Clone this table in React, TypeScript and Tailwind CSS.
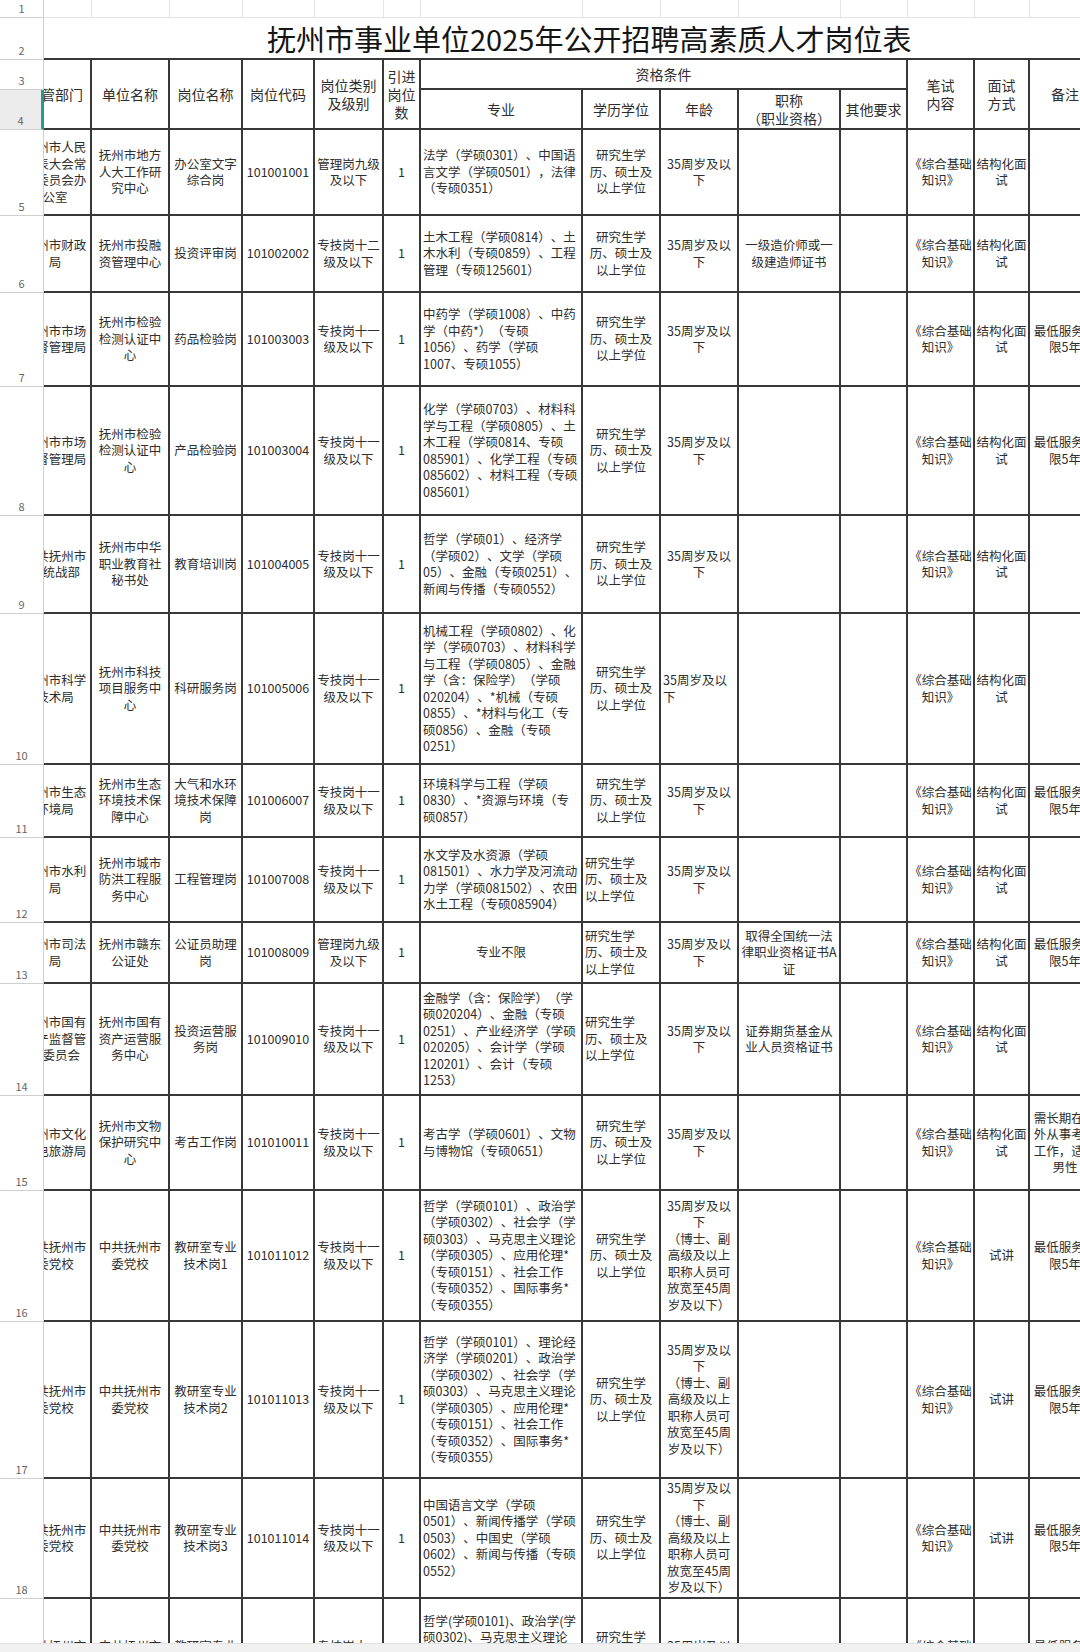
import React from "react";

type Row = {
  n: number;
  h: string;
  a: string;
  b: string;
  c: string;
  d: string;
  e: string;
  g: string;
  edu?: string;
  age?: string;
  j?: string;
  l?: string;
  m?: string;
  note?: string;
  gCenter?: boolean;
  eduLeft?: boolean;
  ageLeft?: boolean;
};

const EDU = "研究生学历、硕士及以上学位";
const AGE = "35周岁及以下";
const AGE_LONG = "35周岁及以下\n（博士、副高级及以上职称人员可放宽至45周岁及以下）";
const EXAM = "《综合基础知识》";
const TALK = "结构化面试";
const SERVE = "最低服务年限5年";

const rows: Row[] = [
  {
    n: 5,
    h: "h-[86px]",
    a: "抚州市人民代表大会常务委员会办公室",
    b: "抚州市地方人大工作研究中心",
    c: "办公室文字综合岗",
    d: "101001001",
    e: "管理岗九级及以下",
    g: "法学（学硕0301）、中国语言文学（学硕0501），法律（专硕0351）",
  },
  {
    n: 6,
    h: "h-[77px]",
    a: "抚州市财政局",
    b: "抚州市投融资管理中心",
    c: "投资评审岗",
    d: "101002002",
    e: "专技岗十二级及以下",
    g: "土木工程（学硕0814）、土木水利（专硕0859）、工程管理（专硕125601）",
    j: "一级造价师或一级建造师证书",
  },
  {
    n: 7,
    h: "h-[94px]",
    a: "抚州市市场监督管理局",
    b: "抚州市检验检测认证中心",
    c: "药品检验岗",
    d: "101003003",
    e: "专技岗十一级及以下",
    g: "中药学（学硕1008）、中药学（中药*）（专硕1056）、药学（学硕\n1007、专硕1055）",
    note: SERVE,
  },
  {
    n: 8,
    h: "h-[129px]",
    a: "抚州市市场监督管理局",
    b: "抚州市检验检测认证中心",
    c: "产品检验岗",
    d: "101003004",
    e: "专技岗十一级及以下",
    g: "化学（学硕0703）、材料科学与工程（学硕0805）、土木工程（学硕0814、专硕085901）、化学工程（专硕085602）、材料工程（专硕085601）",
    note: SERVE,
  },
  {
    n: 9,
    h: "h-[98px]",
    a: "中共抚州市委统战部",
    b: "抚州市中华职业教育社秘书处",
    c: "教育培训岗",
    d: "101004005",
    e: "专技岗十一级及以下",
    g: "哲学（学硕01）、经济学（学硕02）、文学（学硕05）、金融（专硕0251）、新闻与传播（专硕0552）",
  },
  {
    n: 10,
    h: "h-[151px]",
    a: "抚州市科学技术局",
    b: "抚州市科技项目服务中心",
    c: "科研服务岗",
    d: "101005006",
    e: "专技岗十一级及以下",
    g: "机械工程（学硕0802）、化学（学硕0703）、材料科学与工程（学硕0805）、金融学（含：保险学）（学硕020204）、*机械（专硕0855）、*材料与化工（专硕0856）、金融（专硕0251）",
    ageLeft: true,
  },
  {
    n: 11,
    h: "h-[73px]",
    a: "抚州市生态环境局",
    b: "抚州市生态环境技术保障中心",
    c: "大气和水环境技术保障岗",
    d: "101006007",
    e: "专技岗十一级及以下",
    g: "环境科学与工程（学硕0830）、*资源与环境（专硕0857）",
    note: SERVE,
  },
  {
    n: 12,
    h: "h-[85px]",
    a: "抚州市水利局",
    b: "抚州市城市防洪工程服务中心",
    c: "工程管理岗",
    d: "101007008",
    e: "专技岗十一级及以下",
    g: "水文学及水资源（学硕081501）、水力学及河流动力学（学硕081502）、农田水土工程（专硕085904）",
    eduLeft: true,
  },
  {
    n: 13,
    h: "h-[61px]",
    a: "抚州市司法局",
    b: "抚州市赣东公证处",
    c: "公证员助理岗",
    d: "101008009",
    e: "管理岗九级及以下",
    g: "专业不限",
    gCenter: true,
    eduLeft: true,
    j: "取得全国统一法律职业资格证书A证",
    note: SERVE,
  },
  {
    n: 14,
    h: "h-[112px]",
    a: "抚州市国有资产监督管理委员会",
    b: "抚州市国有资产运营服务中心",
    c: "投资运营服务岗",
    d: "101009010",
    e: "专技岗十一级及以下",
    g: "金融学（含：保险学）（学硕020204）、金融（专硕0251）、产业经济学（学硕020205）、会计学（学硕120201）、会计（专硕1253）",
    eduLeft: true,
    j: "证券期货基金从业人员资格证书",
  },
  {
    n: 15,
    h: "h-[95px]",
    a: "抚州市文化广电旅游局",
    b: "抚州市文物保护研究中心",
    c: "考古工作岗",
    d: "101010011",
    e: "专技岗十一级及以下",
    g: "考古学（学硕0601）、文物与博物馆（专硕0651）",
    note: "需长期在野外从事考古工作，适合男性",
  },
  {
    n: 16,
    h: "h-[131px]",
    a: "中共抚州市委党校",
    b: "中共抚州市委党校",
    c: "教研室专业技术岗1",
    d: "101011012",
    e: "专技岗十一级及以下",
    g: "哲学（学硕0101）、政治学（学硕0302）、社会学（学硕0303）、马克思主义理论（学硕0305）、应用伦理*（专硕0151）、社会工作（专硕0352）、国际事务*（专硕0355）",
    age: AGE_LONG,
    m: "试讲",
    note: SERVE,
  },
  {
    n: 17,
    h: "h-[157px]",
    a: "中共抚州市委党校",
    b: "中共抚州市委党校",
    c: "教研室专业技术岗2",
    d: "101011013",
    e: "专技岗十一级及以下",
    g: "哲学（学硕0101）、理论经济学（学硕0201）、政治学（学硕0302）、社会学（学硕0303）、马克思主义理论（学硕0305）、应用伦理*（专硕0151）、社会工作（专硕0352）、国际事务*（专硕0355）",
    age: AGE_LONG,
    m: "试讲",
    note: SERVE,
  },
  {
    n: 18,
    h: "h-[120px]",
    a: "中共抚州市委党校",
    b: "中共抚州市委党校",
    c: "教研室专业技术岗3",
    d: "101011014",
    e: "专技岗十一级及以下",
    g: "中国语言文学（学硕0501）、新闻传播学（学硕0503）、中国史（学硕0602）、新闻与传播（专硕0552）",
    age: AGE_LONG,
    m: "试讲",
    note: SERVE,
  },
  {
    n: 19,
    h: "h-[112px]",
    a: "中共抚州市委党校",
    b: "中共抚州市委党校",
    c: "教研室专业技术岗4",
    d: "101011015",
    e: "专技岗十一级及以下",
    g: "哲学(学硕0101)、政治学(学硕0302)、马克思主义理论(学硕0305)、社会学(学硕0303)、国际事务*(专硕0355)",
    m: "试讲",
    note: SERVE,
  },
];

const cell = "border-r-2 border-b-2 border-[#383838] px-[2px] text-center";
const tight = "border-r-2 border-b-2 border-[#383838] px-0 text-center";
const head = "border-r-2 border-b-2 border-[#383838] px-[2px] text-center text-[14px] leading-[18px] whitespace-pre-line";
const rowNo = "border-r border-b border-[#cfcfcf] text-center align-bottom text-[11px] leading-[14px] text-[#666] pb-[2px]";
const light = "border-r border-b border-[#e4e4e4]";

// column A is scrolled: only its right part shows
const Clipped = ({ text, head: isHead }: { text: string; head?: boolean }) => (
  <div className="w-full overflow-hidden flex justify-end">
    <div className={`w-[70px] shrink-0 px-[2px] text-center ${isHead ? "text-[14px] leading-[18px]" : ""}`}>{text}</div>
  </div>
);

const App = () => {
  return (
    <div className="w-[1080px] h-[1652px] overflow-hidden flex flex-col bg-white text-[#2e2e2e] font-['Noto_Sans_CJK_SC','Noto_Sans',sans-serif] text-[12.5px] leading-[16.5px] [text-spacing-trim:space-all]">
      <div className="h-[1643px] overflow-hidden">
        <table className="table-fixed w-[1102px] border-separate border-spacing-0">
          <colgroup>
            <col className="w-[44px]" />
            <col className="w-[48px]" />
            <col className="w-[78px]" />
            <col className="w-[73px]" />
            <col className="w-[72px]" />
            <col className="w-[69px]" />
            <col className="w-[37px]" />
            <col className="w-[162px]" />
            <col className="w-[78px]" />
            <col className="w-[78px]" />
            <col className="w-[102px]" />
            <col className="w-[67px]" />
            <col className="w-[67px]" />
            <col className="w-[55px]" />
            <col className="w-[72px]" />
          </colgroup>
          <tbody>
            <tr className="h-[18px]">
              <td className={rowNo}>1</td>
              {Array.from({ length: 14 }).map((_, i) => (
                <td key={i} className={light}></td>
              ))}
            </tr>
            <tr className="h-[42px]">
              <td className={rowNo}>2</td>
              <td colSpan={14} className="border-b-2 border-[#383838] pl-[223px] text-left text-[29px] leading-[36px] text-[#151515] whitespace-nowrap">
                抚州市事业单位2025年公开招聘高素质人才岗位表
              </td>
            </tr>
            <tr className="h-[30px]">
              <td className={rowNo}>3</td>
              <td rowSpan={2} className="border-r-2 border-b-2 border-[#383838] p-0">
                <Clipped text="主管部门" head />
              </td>
              <td rowSpan={2} className={head}>单位名称</td>
              <td rowSpan={2} className={head}>岗位名称</td>
              <td rowSpan={2} className={head}>岗位代码</td>
              <td rowSpan={2} className={head}>岗位类别及级别</td>
              <td rowSpan={2} className={head}>引进岗位数</td>
              <td colSpan={5} className={head}>资格条件</td>
              <td rowSpan={2} className={head}>{"笔试\n内容"}</td>
              <td rowSpan={2} className={head}>{"面试\n方式"}</td>
              <td rowSpan={2} className={head}>备注</td>
            </tr>
            <tr className="h-[40px]">
              <td className="border-r-[3px] border-r-[#1f9e89] border-b border-b-[#cfcfcf] bg-[#ececec] text-center align-bottom text-[11px] leading-[14px] text-[#666] pb-[2px]">
                4
              </td>
              <td className={head}>专业</td>
              <td className={head}>学历学位</td>
              <td className={head}>年龄</td>
              <td className={head}>{"职称\n（职业资格）"}</td>
              <td className={head}>其他要求</td>
            </tr>
            {rows.map((r) => (
              <tr key={r.n} className={r.h}>
                <td className={rowNo}>{r.n}</td>
                <td className="border-r-2 border-b-2 border-[#383838] p-0">
                  <Clipped text={r.a} />
                </td>
                <td className={cell}>{r.b}</td>
                <td className={cell}>{r.c}</td>
                <td className={cell}>{r.d}</td>
                <td className={cell}>{r.e}</td>
                <td className={cell}>1</td>
                <td className={`${cell} whitespace-pre-line ${r.gCenter ? "" : "!text-left"}`}>{r.g}</td>
                <td className={`${cell} ${r.eduLeft ? "!text-left" : ""}`}>{r.edu ?? EDU}</td>
                <td className={`${cell} whitespace-pre-line ${r.ageLeft ? "!text-left" : ""}`}>{r.age ?? AGE}</td>
                <td className={cell}>{r.j ?? ""}</td>
                <td className={cell}></td>
                <td className={tight}>{r.l ?? EXAM}</td>
                <td className={tight}>{r.m ?? TALK}</td>
                <td className={cell}>{r.note ?? ""}</td>
              </tr>
            ))}
          </tbody>
        </table>
      </div>
      <div className="h-[9px] bg-[#f1f1f1] border-t border-[#e2e2e2]" />
    </div>
  );
};

export default App;
